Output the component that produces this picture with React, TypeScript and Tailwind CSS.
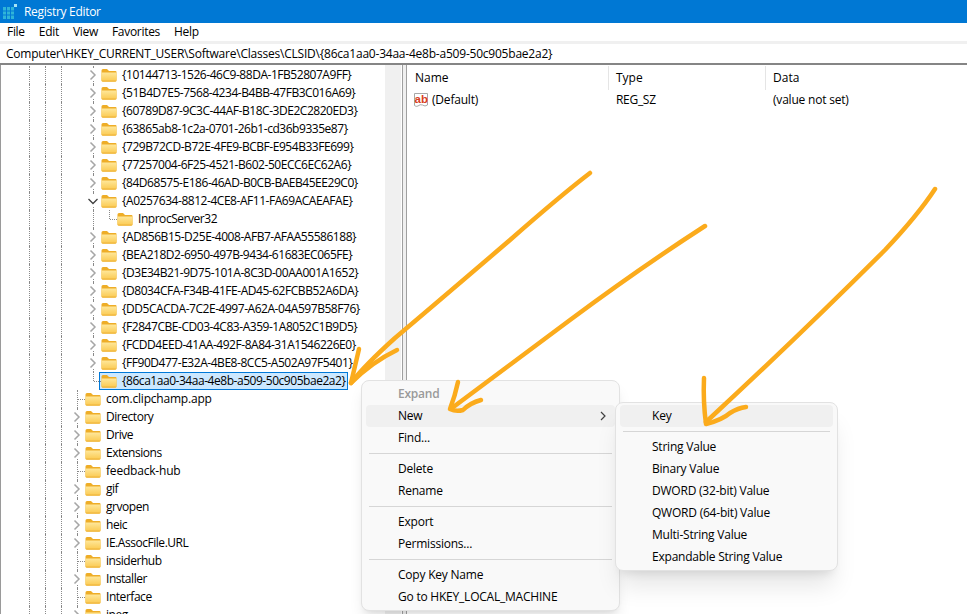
import React from "react";

const font = "font-['Open_Sans',sans-serif]";

function Folder() {
  return (
    <svg width="16" height="14" viewBox="0 0 16 14" className="shrink-0">
      <defs>
        <linearGradient id="fb" x1="0" y1="0" x2="0" y2="1">
          <stop offset="0" stopColor="#fee79a" />
          <stop offset="1" stopColor="#fbc94f" />
        </linearGradient>
      </defs>
      <path d="M0.5 2.5 Q0.5 1 2 1 H6 L8 3 H14.5 Q15.5 3 15.5 4 V12 Q15.5 13.5 14 13.5 H2 Q0.5 13.5 0.5 12 Z" fill="#eead27" />
      <path d="M0.5 4.5 H15.5 V12 Q15.5 13.5 14 13.5 H2 Q0.5 13.5 0.5 12 Z" fill="url(#fb)" />
      <path d="M0.5 12.5 H15.5 Q15.5 13.5 14 13.5 H2 Q0.5 13.5 0.5 12.5 Z" fill="#eeb43c" />
    </svg>
  );
}

function Chevron({ open = false }: { open?: boolean }) {
  return (
    <svg width="16" height="18" viewBox="0 0 16 18" className="absolute left-0 top-0">
      <rect x="3" y="3" width="10" height="12" fill="#ffffff" />
      {open ? (
        <path d="M3.5 7 L8 11.5 L12.5 7" fill="none" stroke="#404040" strokeWidth="1.3" />
      ) : (
        <path d="M5.5 4.5 L10 9 L5.5 13.5" fill="none" stroke="#a6a6a6" strokeWidth="1.5" />
      )}
    </svg>
  );
}

function Guide({ kind }: { kind: "none" | "line" | "branch" | "half" }) {
  return (
    <div className="relative h-[18px] w-4 shrink-0">
      {kind !== "none" && (
        <div
          className={
            kind === "half"
              ? "ml-2 h-[9px] w-0 border-l border-dotted border-[#8a8a8a]"
              : "ml-2 h-[18px] w-0 border-l border-dotted border-[#8a8a8a]"
          }
        />
      )}
      {(kind === "branch" || kind === "half") && (
        <div className="absolute left-[9px] top-[9px] w-[7px] border-t border-dotted border-[#8a8a8a]" />
      )}
    </div>
  );
}

type Mark = "chevron" | "open" | "branch" | "last";

function Mk({ mark }: { mark: Mark }) {
  if (mark === "chevron" || mark === "open") {
    return (
      <div className="relative h-[18px] w-4 shrink-0">
        <div className="ml-2 h-[18px] w-0 border-l border-dotted border-[#8a8a8a]" />
        <Chevron open={mark === "open"} />
      </div>
    );
  }
  return <Guide kind={mark === "last" ? "half" : "branch"} />;
}

function Row({ label, mark, depth, selected = false, wide = false }: { label: string; mark: Mark; depth: 3 | 4 | 5; selected?: boolean; wide?: boolean }) {
  const track = wide ? "tracking-[-0.2px]" : "tracking-[-0.46px]";
  return (
    <div className="flex h-[18px] items-center pl-[21px]">
      <Guide kind="line" />
      <Guide kind="line" />
      <Guide kind="line" />
      {depth === 3 ? (
        <Mk mark={mark} />
      ) : (
        <>
          <Guide kind="none" />
          {depth === 5 ? (
            <>
              <Guide kind="line" />
              <Mk mark={mark} />
            </>
          ) : (
            <Mk mark={mark} />
          )}
        </>
      )}
      {selected ? (
        <div className="-ml-[2px] flex h-[18px] items-center gap-[5px] whitespace-nowrap border border-[#0078d7] bg-[#cce8ff] pl-px pr-[2px] text-black">
          <Folder />
          <span className={track}>{label}</span>
        </div>
      ) : (
        <div className="flex items-center gap-[5px] whitespace-nowrap text-black">
          <Folder />
          <span className={track}>{label}</span>
        </div>
      )}
    </div>
  );
}

const rows: { label: string; mark: Mark; depth: 3 | 4 | 5; selected?: boolean; wide?: boolean }[] = [
  { label: "{10144713-1526-46C9-88DA-1FB52807A9FF}", mark: "chevron", depth: 4 },
  { label: "{51B4D7E5-7568-4234-B4BB-47FB3C016A69}", mark: "chevron", depth: 4 },
  { label: "{60789D87-9C3C-44AF-B18C-3DE2C2820ED3}", mark: "chevron", depth: 4 },
  { label: "{63865ab8-1c2a-0701-26b1-cd36b9335e87}", mark: "chevron", depth: 4 },
  { label: "{729B72CD-B72E-4FE9-BCBF-E954B33FE699}", mark: "chevron", depth: 4 },
  { label: "{77257004-6F25-4521-B602-50ECC6EC62A6}", mark: "chevron", depth: 4 },
  { label: "{84D68575-E186-46AD-B0CB-BAEB45EE29C0}", mark: "chevron", depth: 4 },
  { label: "{A0257634-8812-4CE8-AF11-FA69ACAEAFAE}", mark: "open", depth: 4 },
  { label: "InprocServer32", mark: "last", depth: 5 },
  { label: "{AD856B15-D25E-4008-AFB7-AFAA55586188}", mark: "chevron", depth: 4 },
  { label: "{BEA218D2-6950-497B-9434-61683EC065FE}", mark: "chevron", depth: 4 },
  { label: "{D3E34B21-9D75-101A-8C3D-00AA001A1652}", mark: "chevron", depth: 4 },
  { label: "{D8034CFA-F34B-41FE-AD45-62FCBB52A6DA}", mark: "chevron", depth: 4 },
  { label: "{DD5CACDA-7C2E-4997-A62A-04A597B58F76}", mark: "chevron", depth: 4 },
  { label: "{F2847CBE-CD03-4C83-A359-1A8052C1B9D5}", mark: "chevron", depth: 4 },
  { label: "{FCDD4EED-41AA-492F-8A84-31A1546226E0}", mark: "chevron", depth: 4 },
  { label: "{FF90D477-E32A-4BE8-8CC5-A502A97F5401}", mark: "chevron", depth: 4 },
  { label: "{86ca1aa0-34aa-4e8b-a509-50c905bae2a2}", mark: "last", depth: 4, selected: true },
  { label: "com.clipchamp.app", mark: "branch", depth: 3, wide: true },
  { label: "Directory", mark: "chevron", depth: 3 },
  { label: "Drive", mark: "chevron", depth: 3 },
  { label: "Extensions", mark: "chevron", depth: 3 },
  { label: "feedback-hub", mark: "branch", depth: 3, wide: true },
  { label: "gif", mark: "chevron", depth: 3 },
  { label: "grvopen", mark: "chevron", depth: 3 },
  { label: "heic", mark: "chevron", depth: 3 },
  { label: "IE.AssocFile.URL", mark: "chevron", depth: 3 },
  { label: "insiderhub", mark: "branch", depth: 3 },
  { label: "Installer", mark: "chevron", depth: 3 },
  { label: "Interface", mark: "branch", depth: 3 },
  { label: "jpeg", mark: "chevron", depth: 3 },
];

function MenuItem({ label, hover = false, disabled = false, arrow = false }: { label: string; hover?: boolean; disabled?: boolean; arrow?: boolean }) {
  return (
    <div className={(hover ? "bg-[#f0f0f0] " : "") + "flex h-[22px] items-center justify-between rounded-[4px] pl-[32px] tracking-[-0.22px]"}>
      <span className={disabled ? "font-semibold text-[#9a9a9a]" : "text-black"}>{label}</span>
      {arrow && (
        <svg width="8" height="10" viewBox="0 0 8 10" className="mr-2">
          <path d="M2 1 L6 5 L2 9" fill="none" stroke="#404040" strokeWidth="1.2" />
        </svg>
      )}
    </div>
  );
}

function Sep() {
  return (
    <div className="px-[3px] py-1">
      <div className="h-px bg-[#d6d6d6]" />
    </div>
  );
}

function Arrows() {
  const c = "#fbab1c";
  return (
    <svg width="967" height="614" viewBox="0 0 967 614" className="pointer-events-none absolute left-0 top-0" fill="none" stroke={c} strokeWidth="4.5" strokeLinecap="round" strokeLinejoin="round">
      <path d="M590 173 Q560 196 510 240 Q440 300 395 338 Q365 365 351 383" />
      <path d="M359 349 Q355 366 351 383 Q372 362 397 350" />
      <path d="M705 226 Q640 268 570 320 Q500 372 452 408" />
      <path d="M458 382 Q455 396 450 409 Q456 412 463 410 Q470 403 481 400" />
      <path d="M935 189 Q918 215 885 250 Q800 335 706 422" />
      <path d="M704 378 Q703 402 706 424 Q722 420 730 413 Q738 408 746 407" />
    </svg>
  );
}

export default function App() {
  return (
    <div className={"relative h-[614px] w-[967px] overflow-hidden bg-white text-[12px] leading-none text-black " + font}>
      <div className="flex h-[23px] items-center gap-[7px] bg-[#0078d4] pl-[3px] text-white">
        <svg width="14" height="15" viewBox="0 0 14 15" className="shrink-0">
          <path d="M0 3h11v12H0z" fill="#2fb4d8" />
          <path d="M3.5 3v12M7.5 3v12M0 7h11M0 11h11" stroke="#0078d4" strokeWidth="1" />
          <path d="M11 0h3v3h-3z" fill="#a8e4f4" />
        </svg>
        <span className="tracking-[-0.3px]">Registry Editor</span>
      </div>
      <div className="flex h-[18px] items-center gap-[14px] bg-white pl-[7px] tracking-[-0.3px] text-black">
        <span>File</span>
        <span>Edit</span>
        <span>View</span>
        <span>Favorites</span>
        <span>Help</span>
      </div>
      <div className="h-[3px] bg-[#f0f0f0]" />
      <div className="flex h-[19px] items-center bg-white pl-[6px] tracking-[-0.22px]">Computer\HKEY_CURRENT_USER\Software\Classes\CLSID\{"{"}86ca1aa0-34aa-4e8b-a509-50c905bae2a2{"}"}</div>
      <div className="h-[2px] bg-[#858585]" />
      <div className="flex h-[549px]">
        <div className="flex w-[402px] border-l border-[#9a9a9a]">
          <div className="w-[384px] overflow-hidden pt-px">
            <div className="-ml-px">
              {rows.map((r) => (
                <Row key={r.label} {...r} />
              ))}
            </div>
          </div>
          <div className="w-[16px] bg-[#f0f0f0]" />
          <div className="w-px bg-white" />
        </div>
        <div className="w-[5px] border-x border-[#a0a0a0] bg-[#f0f0f0]" />
        <div className="flex-1">
          <div className="flex h-[25px] items-center pt-px">
            <div className="flex h-full w-[202px] items-center border-r border-[#e5e5e5] pl-2">Name</div>
            <div className="flex h-full w-[157px] items-center border-r border-[#e5e5e5] pl-[7px]">Type</div>
            <div className="pl-[7px]">Data</div>
          </div>
          <div className="flex h-[20px] items-center">
            <div className="flex w-[202px] items-center gap-[3px] pl-[6px]">
              <svg width="16" height="16" viewBox="0 0 16 16" className="shrink-0">
                <path d="M1.5 1.5 H14.5 V13 Q12 15 9.5 13 Q7 12 5 14 Q3 15 1.5 13.5 Z" fill="#ffffff" stroke="#a8a8a8" strokeWidth="1" />
                <text x="1.5" y="10.5" fontSize="11.5" fontWeight="700" fill="#d8401f" fontFamily="'Liberation Sans',sans-serif">ab</text>
              </svg>
              <span className="tracking-[-0.2px]">(Default)</span>
            </div>
            <div className="w-[157px] pl-[7px] tracking-[-0.3px]">REG_SZ</div>
            <div className="pl-[7px] tracking-[-0.2px]">(value not set)</div>
          </div>
        </div>
      </div>

      <div className="absolute left-[361px] top-[380px] w-[259px] rounded-lg border border-[#e2e2e2] bg-[#f9f9f9] px-[4px] py-[2px] shadow-lg">
        <MenuItem label="Expand" disabled />
        <MenuItem label="New" hover arrow />
        <MenuItem label="Find..." />
        <Sep />
        <MenuItem label="Delete" />
        <MenuItem label="Rename" />
        <Sep />
        <MenuItem label="Export" />
        <MenuItem label="Permissions..." />
        <Sep />
        <MenuItem label="Copy Key Name" />
        <MenuItem label="Go to HKEY_LOCAL_MACHINE" />
      </div>

      <div className="absolute left-[615px] top-[402px] w-[223px] rounded-lg border border-[#e2e2e2] bg-[#f9f9f9] px-[4px] py-[2px] shadow-xl">
        <MenuItem label="Key" hover />
        <Sep />
        <MenuItem label="String Value" />
        <MenuItem label="Binary Value" />
        <MenuItem label="DWORD (32-bit) Value" />
        <MenuItem label="QWORD (64-bit) Value" />
        <MenuItem label="Multi-String Value" />
        <MenuItem label="Expandable String Value" />
      </div>

      <Arrows />
    </div>
  );
}
